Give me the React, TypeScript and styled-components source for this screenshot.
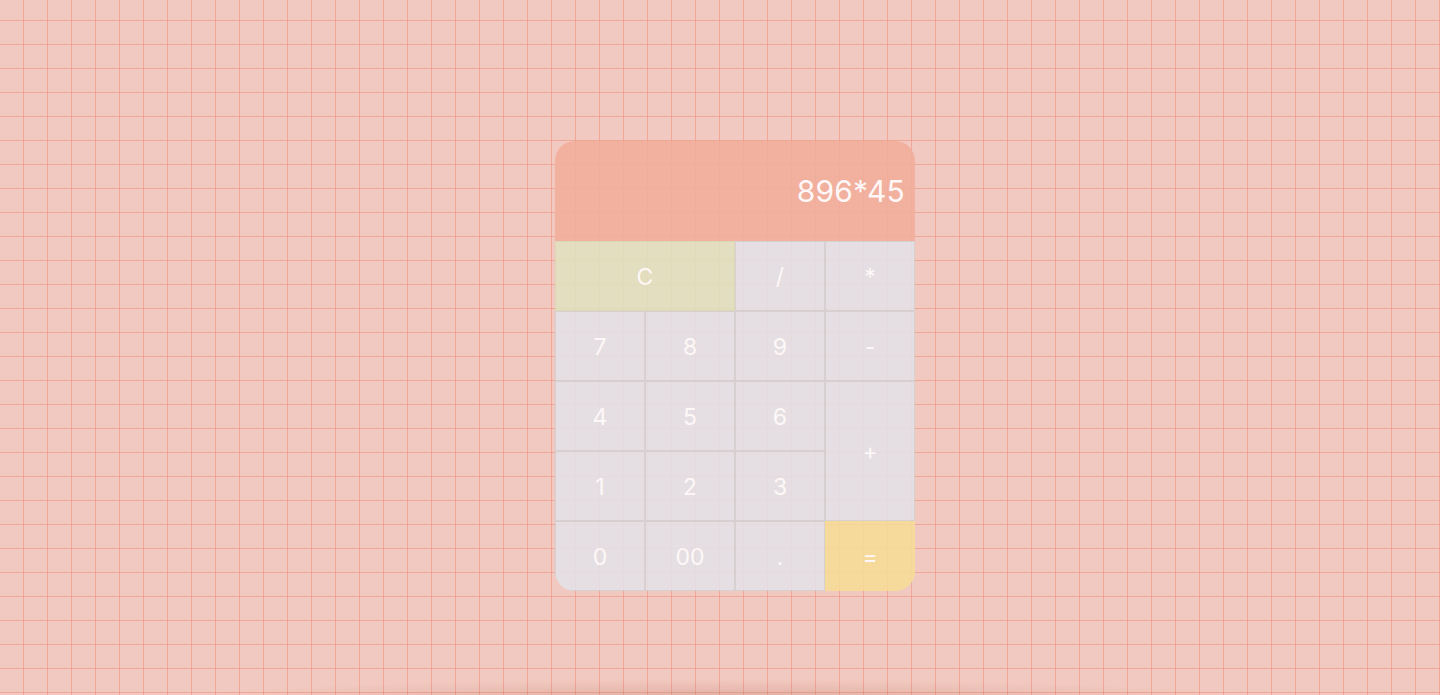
import React from "react";
import styled, { createGlobalStyle } from "styled-components";

const Global = createGlobalStyle`
  html, body { margin: 0; padding: 0; }
  body {
    width: 1440px;
    height: 695px;
    overflow: hidden;
    font-family: "Inter", "Open Sans", sans-serif;
    background-color: #f2c9c0;
    background-image:
      linear-gradient(to right, transparent 23px, rgba(236, 140, 118, 0.55) 23px, rgba(236, 140, 118, 0.55) 24px),
      linear-gradient(to bottom, transparent 23px, rgba(236, 140, 118, 0.55) 23px, rgba(236, 140, 118, 0.55) 24px);
    background-size: 24px 24px, 24px 24px;
    background-position: 0 0, 0 -3px;
  }
`;

const Page = styled.main`
  width: 1440px;
  height: 695px;
  display: flex;
  justify-content: center;
  align-items: flex-start;
  padding: 141px 0 0 30px;
  box-sizing: border-box;
  position: relative;
  &::after {
    content: "";
    position: absolute;
    left: 0;
    right: 0;
    bottom: 0;
    height: 20px;
    background: radial-gradient(ellipse 45% 100% at 50% 100%, rgba(170, 90, 70, 0.2), transparent 80%);
    pointer-events: none;
  }
`;

const Calculator = styled.div`
  width: 360px;
  border-radius: 20px;
  overflow: hidden;
  opacity: 0.88;
  display: flex;
  flex-direction: column;
`;

const Display = styled.div`
  height: 100px;
  background: #f3ad9b;
  display: flex;
  align-items: center;
  justify-content: flex-end;
  padding: 0 10px;
  box-sizing: border-box;
  color: #ffffff;
  font-size: 30px;
  font-weight: 400;
  letter-spacing: 0.2px;
`;

const Keys = styled.div`
  display: grid;
  grid-template-columns: repeat(4, 90px);
  grid-template-rows: repeat(5, 70px);
  background: #d9d6d9;
`;

type Tone = "plain" | "clear" | "equals";

const Key = styled.button<{ $tone?: Tone; $col?: string; $row?: string }>`
  box-sizing: border-box;
  border: 1.5px solid #d4d1d4;
  margin: 0;
  padding: 2px 0 0;
  font-family: inherit;
  font-size: 23px;
  font-weight: 400;
  color: #ffffff;
  cursor: pointer;
  grid-column: ${(p) => p.$col || "auto"};
  grid-row: ${(p) => p.$row || "auto"};
  background: ${(p) =>
    p.$tone === "clear" ? "#e2e2bf" : p.$tone === "equals" ? "#f6dd98" : "#e4e3e8"};
  border-color: ${(p) =>
    p.$tone === "equals" ? "#f6dd98" : p.$tone === "clear" ? "#dadab6" : "#d4d1d4"};
`;

const keys: { label: string; tone?: Tone; col?: string; row?: string }[] = [
  { label: "C", tone: "clear", col: "span 2" },
  { label: "/" },
  { label: "*" },
  { label: "7" },
  { label: "8" },
  { label: "9" },
  { label: "-" },
  { label: "4" },
  { label: "5" },
  { label: "6" },
  { label: "+", col: "4", row: "3 / span 2" },
  { label: "1" },
  { label: "2" },
  { label: "3" },
  { label: "0" },
  { label: "00" },
  { label: "." },
  { label: "=", tone: "equals" },
];

export default function App() {
  return (
    <>
      <Global />
      <Page>
        <Calculator>
          <Display>896*45</Display>
          <Keys>
            {keys.map((k) => (
              <Key key={k.label} $tone={k.tone} $col={k.col} $row={k.row}>
                {k.label}
              </Key>
            ))}
          </Keys>
        </Calculator>
      </Page>
    </>
  );
}
